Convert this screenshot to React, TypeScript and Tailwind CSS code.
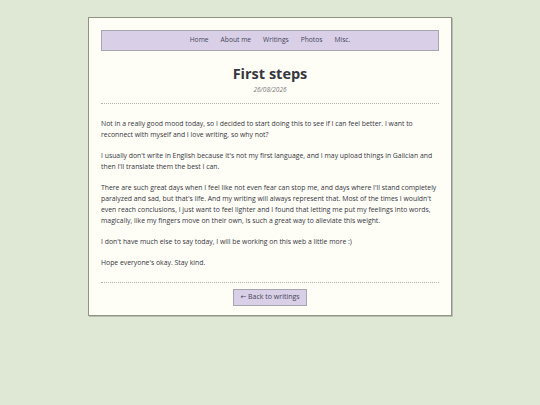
import React from 'react';

const navItems = ['Home', 'About me', 'Writings', 'Photos', 'Misc.'];

const paragraphs = [
  'Not in a really good mood today, so I decided to start doing this to see if I can feel better. I want to reconnect with myself and I love writing, so why not?',
  "I usually don't write in English because it's not my first language, and I may upload things in Galician and then I'll translate them the best I can.",
  "There are such great days when I feel like not even fear can stop me, and days where I'll stand completely paralyzed and sad, but that's life. And my writing will always represent that. Most of the times I wouldn't even reach conclusions, I just want to feel lighter and I found that letting me put my feelings into words, magically, like my fingers move on their own, is such a great way to alleviate this weight.",
  "I don't have much else to say today, I will be working on this web a little more :)",
  "Hope everyone's okay. Stay kind.",
];

export default function App() {
  return (
    <div
      className="min-h-screen w-full bg-[#dfe8d5] pt-[17px] text-[#35353f]"
      style={{ fontFamily: '"Open Sans", "DejaVu Sans", sans-serif' }}
    >
      <div className="mx-auto w-[364px] border border-[#8f9484] bg-[#fffef6] px-[12px] pt-[12px] pb-[9px] shadow-[1px_1px_0_#b9bfae]">
        <nav className="flex h-[21px] items-center justify-center gap-[12px] border border-[#a7a5ae] bg-[#d9d0e7] text-[6.7px] text-[#45455a]">
          {navItems.map((item) => (
            <a key={item} href="#" className="leading-none">
              {item}
            </a>
          ))}
        </nav>

        <header className="mt-[14px] text-center">
          <h1 className="text-[14.5px] font-bold leading-[18px] text-[#363640]">First steps</h1>
          <p className="mt-[3px] text-[6.5px] italic leading-[8px] text-[#77777a]">26/08/2026</p>
        </header>

        <div className="mt-[9px] border-t border-dotted border-[#b5b5ad]" />

        <article className="mt-[14px] flex flex-col gap-[10px] text-[6.85px] leading-[11px]">
          {paragraphs.map((p, i) => (
            <p key={i}>{p}</p>
          ))}
        </article>

        <div className="mt-[14px] border-t border-dotted border-[#b5b5ad]" />

        <div className="mt-[6px] flex justify-center">
          <a
            href="#"
            className="flex h-[17px] items-center border border-[#a7a5ae] bg-[#d9d0e7] px-[6px] text-[7px] text-[#45455a]"
          >
            ← Back to writings
          </a>
        </div>
      </div>
    </div>
  );
}
